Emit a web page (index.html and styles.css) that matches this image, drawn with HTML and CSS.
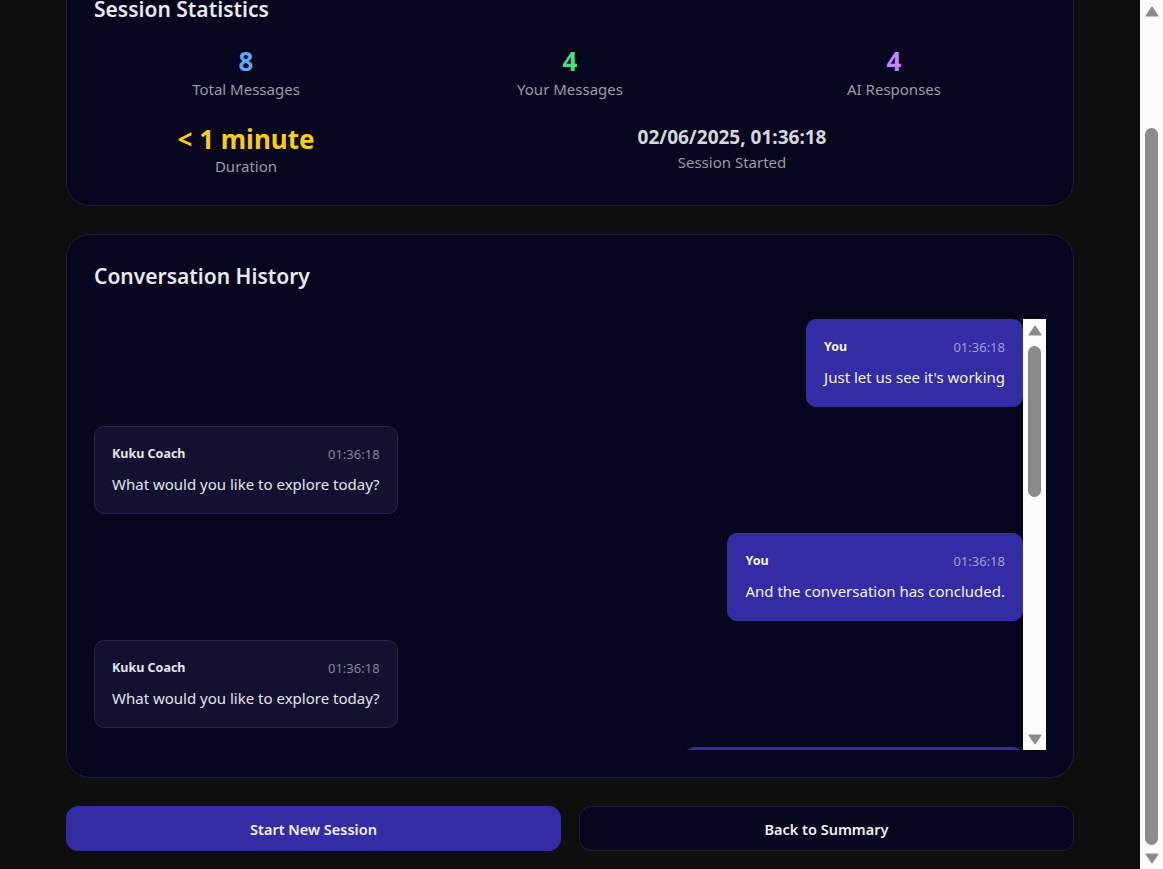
FILE: index.html
```html
<!DOCTYPE html>
<html lang="en">
<head>
<meta charset="utf-8">
<title>Session Summary</title>
<link rel="stylesheet" href="styles.css">
</head>
<body>
<div class="page">
  <header class="page-header">
    <h1 class="page-title">Session Complete</h1>
    <p class="page-sub">Here's a summary of your coaching session with Kuku Coach</p>
  </header>

  <section class="card stats-card">
    <h2 class="card-title">Session Statistics</h2>
    <div class="stats-grid">
      <div class="stat">
        <div class="stat-value blue">8</div>
        <div class="stat-label">Total Messages</div>
      </div>
      <div class="stat">
        <div class="stat-value green">4</div>
        <div class="stat-label">Your Messages</div>
      </div>
      <div class="stat">
        <div class="stat-value purple">4</div>
        <div class="stat-label">AI Responses</div>
      </div>
      <div class="stat">
        <div class="stat-value big yellow">&lt; 1 minute</div>
        <div class="stat-label">Duration</div>
      </div>
      <div class="stat span-2">
        <div class="stat-value date">02/06/2025, 01:36:18</div>
        <div class="stat-label">Session Started</div>
      </div>
    </div>
  </section>

  <section class="card history-card">
    <h2 class="card-title history-title">Conversation History</h2>
    <div class="chat-scroll">
      <div class="chat-list">
        <div class="msg user">
          <div class="msg-head"><span class="msg-name">You</span><span class="msg-time">01:36:18</span></div>
          <div class="msg-text">Just let us see it's working</div>
        </div>
        <div class="msg ai">
          <div class="msg-head"><span class="msg-name">Kuku Coach</span><span class="msg-time">01:36:18</span></div>
          <div class="msg-text">What would you like to explore today?</div>
        </div>
        <div class="msg user">
          <div class="msg-head"><span class="msg-name">You</span><span class="msg-time">01:36:18</span></div>
          <div class="msg-text">And the conversation has concluded.</div>
        </div>
        <div class="msg ai">
          <div class="msg-head"><span class="msg-name">Kuku Coach</span><span class="msg-time">01:36:18</span></div>
          <div class="msg-text">What would you like to explore today?</div>
        </div>
        <div class="msg user">
          <div class="msg-head"><span class="msg-name">You</span><span class="msg-time">01:36:18</span></div>
          <div class="msg-text">That covers everything I wanted to discuss.</div>
        </div>
        <div class="msg ai">
          <div class="msg-head"><span class="msg-name">Kuku Coach</span><span class="msg-time">01:36:18</span></div>
          <div class="msg-text">What would you like to explore today?</div>
        </div>
        <div class="msg user">
          <div class="msg-head"><span class="msg-name">You</span><span class="msg-time">01:36:18</span></div>
          <div class="msg-text">Let's end the session here.</div>
        </div>
        <div class="msg ai">
          <div class="msg-head"><span class="msg-name">Kuku Coach</span><span class="msg-time">01:36:18</span></div>
          <div class="msg-text">Thank you for sharing today. Take care, and come back any time you'd like to continue exploring.</div>
        </div>
      </div>
      <div class="sb sb-inner" aria-hidden="true">
        <div class="sb-btn"><svg width="14" height="11" viewBox="0 0 14 11"><path d="M7 1.2 L13 10 L1 10 Z" fill="#8b8b8b" stroke="#8b8b8b" stroke-width="1.2" stroke-linejoin="round"/></svg></div>
        <div class="sb-track sb-track-top"><div class="sb-thumb sb-thumb-inner"></div></div>
        <div class="sb-btn"><svg width="14" height="11" viewBox="0 0 14 11"><path d="M1 1 L13 1 L7 9.8 Z" fill="#8b8b8b" stroke="#8b8b8b" stroke-width="1.2" stroke-linejoin="round"/></svg></div>
      </div>
    </div>
  </section>

  <div class="actions">
    <button class="btn btn-primary" type="button">Start New Session</button>
    <button class="btn btn-secondary" type="button">Back to Summary</button>
  </div>
</div>

<div class="sb sb-page" aria-hidden="true">
  <div class="sb-btn"><svg width="14" height="11" viewBox="0 0 14 11"><path d="M7 1.2 L13 10 L1 10 Z" fill="#8b8b8b" stroke="#8b8b8b" stroke-width="1.2" stroke-linejoin="round"/></svg></div>
  <div class="sb-track sb-track-bottom"><div class="sb-thumb sb-thumb-page"></div></div>
  <div class="sb-btn"><svg width="14" height="11" viewBox="0 0 14 11"><path d="M1 1 L13 1 L7 9.8 Z" fill="#8b8b8b" stroke="#8b8b8b" stroke-width="1.2" stroke-linejoin="round"/></svg></div>
</div>
<script src="script.js"></script>
</body>
</html>
```

FILE: styles.css
```css
* { box-sizing: border-box; }

html {
  background: #0e0e0e;
  scrollbar-width: none;
}
html::-webkit-scrollbar { display: none; }

body {
  margin: 0;
  padding-right: 23px;
  background: #0e0e0e;
  color: #e5e7eb;
  font-family: "Noto Sans", "Open Sans", sans-serif;
}

.page {
  max-width: 1008px;
  margin: 0 auto;
  padding: 28px 0 18px;
  display: flex;
  flex-direction: column;
  gap: 28px;
}

.page-header {
  text-align: center;
  height: 60px;
}
.page-title {
  margin: 0;
  font-size: 28px;
  line-height: 34px;
  font-weight: 700;
  color: #f3f4f6;
}
.page-sub {
  margin: 4px 0 0;
  font-size: 15px;
  color: #9ca3af;
}

.card {
  background: #06061f;
  border: 1px solid #1d1c3a;
  border-radius: 24px;
  padding: 27px;
}

.stats-card {
  padding-bottom: 28px;
}

.card-title {
  margin: 0 0 21px;
  font-size: 21px;
  line-height: 28px;
  font-weight: 600;
  color: #e8e8ee;
}

.history-title {
  margin-bottom: 29px;
}

.stats-grid {
  display: grid;
  grid-template-columns: repeat(3, 1fr);
  column-gap: 20px;
  row-gap: 23px;
  align-items: start;
  text-align: center;
}

.span-2 { grid-column: span 2; }

.stat-value {
  font-size: 26px;
  line-height: 34px;
  font-weight: 700;
}
.stat-value.big {
  font-size: 26px;
  line-height: 32px;
}
.stat-value.date {
  font-size: 19px;
  line-height: 28px;
  color: #d6d6de;
}
.stat-label {
  font-size: 15px;
  line-height: 22px;
  color: #9a9aa8;
}

.blue { color: #60a5fa; }
.green { color: #4ade80; }
.purple { color: #c084fc; }
.yellow { color: #facc15; }

.chat-scroll {
  display: flex;
  height: 431px;
}

.chat-list {
  flex: 1;
  min-width: 0;
  overflow: hidden;
  display: flex;
  flex-direction: column;
  gap: 19px;
}

.msg {
  max-width: 75%;
  border-radius: 10px;
  padding: 17px 17px;
  border: 1px solid transparent;
  flex-shrink: 0;
}
.msg.user {
  align-self: flex-end;
  background: #332ca5;
  border-color: #332ca5;
  color: #f4f4fa;
}
.msg.ai {
  align-self: flex-start;
  background: #12112f;
  border-color: #25244a;
  color: #e4e4ec;
}

.msg-head {
  display: flex;
  justify-content: space-between;
  gap: 24px;
  font-size: 12.5px;
  line-height: 20px;
  margin-bottom: 8px;
}
.msg-name { font-weight: 700; }
.msg-time { font-size: 13px; }
.msg.user .msg-time { color: #a29fd9; }
.msg.ai .msg-time { color: #85849c; }

.msg-text {
  font-size: 15px;
  line-height: 24px;
}

.actions {
  display: grid;
  grid-template-columns: 1fr 1fr;
  gap: 18px;
}

.btn {
  height: 45px;
  border-radius: 12px;
  font-family: inherit;
  font-size: 14.5px;
  font-weight: 600;
  color: #f1f1f6;
  cursor: pointer;
}
.btn-primary {
  background: #332ca5;
  border: 1px solid #332ca5;
}
.btn-secondary {
  background: #06061f;
  border: 1px solid #1d1c3a;
}

/* drawn scrollbars (native ones are not painted in the capture) */
.sb {
  width: 23px;
  flex-shrink: 0;
  background: #fcfcfc;
  display: flex;
  flex-direction: column;
  align-items: center;
}
.sb-page {
  position: fixed;
  top: 0;
  right: 0;
  height: 100vh;
}
.sb-btn {
  height: 22px;
  width: 100%;
  display: flex;
  align-items: center;
  justify-content: center;
  flex-shrink: 0;
}
.sb-track {
  flex: 1;
  width: 100%;
  display: flex;
  flex-direction: column;
  align-items: center;
}
.sb-track-bottom {
  justify-content: flex-end;
  padding-bottom: 2px;
}
.sb-track-top {
  justify-content: flex-start;
  padding-top: 5px;
}
.sb-thumb {
  width: 13px;
  border-radius: 7px;
  background: #8b8b8b;
}
.sb-thumb-page { height: 717px; }
.sb-thumb-inner { height: 151px; }
```

FILE: script.js
```js
function toBottom() {
  window.scrollTo(0, document.documentElement.scrollHeight);
}
toBottom();
window.addEventListener('load', toBottom);
```
